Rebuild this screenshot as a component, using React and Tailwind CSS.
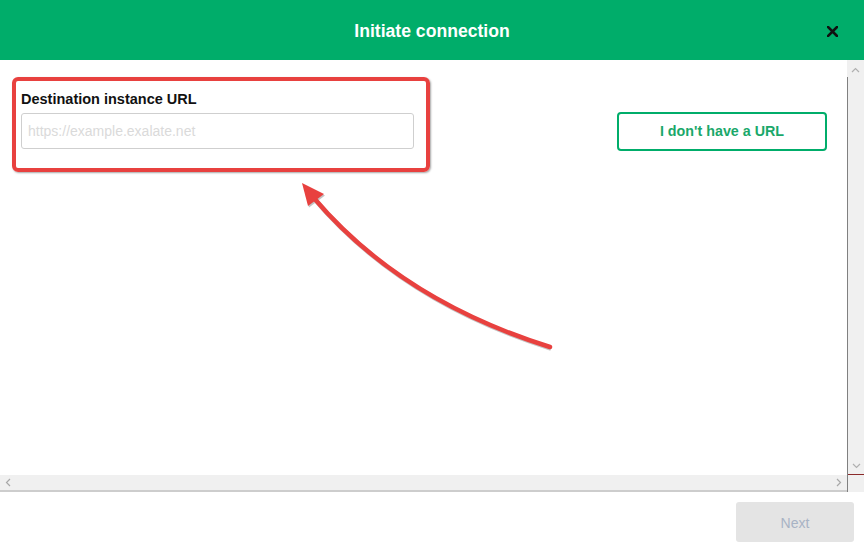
export default function App() {
  return (
    <div className="relative w-[864px] h-[552px] bg-white overflow-hidden font-['Liberation_Sans',Arial,sans-serif]">
      {/* Header */}
      <div className="relative h-[60px] bg-[#00ad6a] flex items-center justify-center">
        <span className="text-white font-bold text-[17.6px] leading-none mt-[3px]">Initiate connection</span>
        <button className="absolute right-[26px] top-[25px] w-[12px] h-[12px] flex items-center justify-center">
          <svg width="11" height="11" viewBox="0 0 11 11">
            <path d="M1 1 L10 10 M10 1 L1 10" stroke="#111" strokeWidth="2.6" strokeLinecap="square" />
          </svg>
        </button>
      </div>

      {/* Body with scrollbars */}
      <div className="flex h-[432px]">
        <div className="flex-1 flex flex-col">
          <div className="h-[415px] flex items-start pt-[17px] pl-[12px] pr-[20px]">
            <div className="w-[418px] h-[95px] border-4 border-[#e8413f] rounded-[6px] pl-[5px] pt-[10px] shadow-[1px_1px_2px_rgba(0,0,0,0.35)]">
              <div className="text-[14.5px] font-bold leading-[16px] text-[#111]">Destination instance URL</div>
              <input
                className="mt-[6px] w-[393px] h-[36px] border border-[#cfcfcf] rounded-[3px] px-[6px] text-[14px] outline-none placeholder:text-[#dadada]"
                placeholder="https://example.exalate.net"
              />
            </div>
            <button className="ml-auto mt-[35px] w-[210px] h-[39px] border-2 border-[#00ad6a] rounded-[4px] text-[#1aa86a] font-bold text-[14.3px] bg-white">
              I don't have a URL
            </button>
          </div>
          <div className="h-[17px] bg-[#f0f0f0] border-b-2 border-[#cdcdcd] flex items-center justify-between px-[5px]">
            <svg width="6" height="9" viewBox="0 0 6 9">
              <path d="M5 1 L1.5 4.5 L5 8" stroke="#a8a8a8" strokeWidth="1.2" fill="none" />
            </svg>
            <svg width="6" height="9" viewBox="0 0 6 9">
              <path d="M1 1 L4.5 4.5 L1 8" stroke="#a8a8a8" strokeWidth="1.2" fill="none" />
            </svg>
          </div>
        </div>
        <div className="w-[17px] flex flex-col bg-[#f0f0f0]">
          <div className="h-[17px] flex items-center justify-center pt-[2px]">
            <svg width="9" height="6" viewBox="0 0 9 6">
              <path d="M1 5 L4.5 1.5 L8 5" stroke="#b0b0b0" strokeWidth="1.2" fill="none" />
            </svg>
          </div>
          <div className="flex-1 border-l border-[#808080] flex flex-col justify-end">
            <div className="h-[16px] flex items-center justify-center">
              <svg width="9" height="6" viewBox="0 0 9 6">
                <path d="M1 1 L4.5 4.5 L8 1" stroke="#b0b0b0" strokeWidth="1.2" fill="none" />
              </svg>
            </div>
            <div className="h-[1px] bg-[#8b2a2a]" />
            <div className="h-[17px]" />
          </div>
        </div>
      </div>

      {/* Footer */}
      <div className="h-[60px] flex items-center justify-end pr-[10px]">
        <button className="w-[118px] h-[40px] bg-[#e4e4e4] rounded-[3px] text-[14px] text-[#a8b3c4] pt-[2px]">Next</button>
      </div>

      {/* Annotation arrow */}
      <svg className="absolute inset-0 pointer-events-none" width="864" height="552" viewBox="0 0 864 552">
        <g transform="translate(1,1.5)" opacity="0.35">
          <path d="M550 347 Q400 300 313 197" stroke="#555" strokeWidth="4.5" fill="none" />
          <path d="M302 183 L324 194 L308 206 Z" fill="#555" />
        </g>
        <path d="M550 347 Q400 300 313 197" stroke="#e8413f" strokeWidth="4.5" fill="none" strokeLinecap="round" />
        <path d="M302 183 L324 194 L308 206 Z" fill="#e8413f" />
      </svg>
    </div>
  );
}
